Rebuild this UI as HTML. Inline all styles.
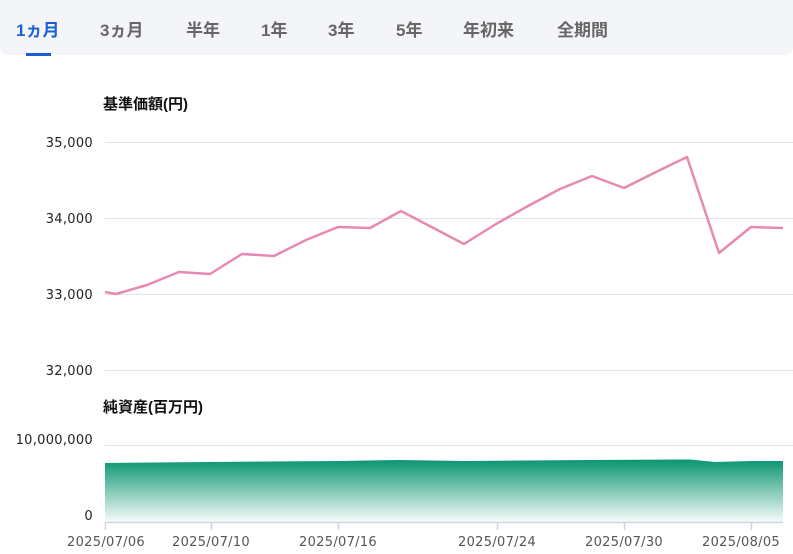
<!DOCTYPE html>
<html><head><meta charset="utf-8"><style>
body{margin:0;width:793px;height:554px;background:#fff;overflow:hidden;font-family:"Liberation Sans","Noto Sans CJK JP",sans-serif;position:relative}
.tabs{position:absolute;left:0;top:0;width:793px;height:55px;background:#f4f5f9;border-radius:0 0 8px 8px}
.tab{position:absolute;top:16px;font-size:17px;font-weight:bold;color:#666}
.act{color:#1a5fd6}
.ul{position:absolute;left:26px;top:53px;width:25px;height:3px;background:#1a5fd6}
</style></head><body>
<div class="tabs">
<span class="tab act" style="left:16px">1ヵ月</span>
<span class="tab" style="left:100px">3ヵ月</span>
<span class="tab" style="left:186px">半年</span>
<span class="tab" style="left:261px">1年</span>
<span class="tab" style="left:328px">3年</span>
<span class="tab" style="left:396px">5年</span>
<span class="tab" style="left:463px">年初来</span>
<span class="tab" style="left:557px">全期間</span>
<div class="ul"></div>
</div>
<svg width="793" height="554" style="position:absolute;left:0;top:0" font-family="Liberation Sans, Noto Sans CJK JP, sans-serif">
<defs><linearGradient id="g" x1="0" y1="0" x2="0" y2="1"><stop offset="0" stop-color="#0a9570"/><stop offset="1" stop-color="#0a9570" stop-opacity="0.03"/></linearGradient></defs>
<text x="103" y="109" font-size="15" font-weight="bold" fill="#111">基準価額(円)</text>
<g stroke="#e3e3e8" stroke-width="1">
<line x1="105" y1="142.5" x2="793" y2="142.5"/><line x1="105" y1="218.5" x2="793" y2="218.5"/>
<line x1="105" y1="294.5" x2="793" y2="294.5"/><line x1="105" y1="370.5" x2="793" y2="370.5"/>
<line x1="105" y1="445.5" x2="793" y2="445.5"/></g>
<g font-size="13" fill="#222" text-anchor="end" font-family="DejaVu Sans, sans-serif" letter-spacing="0.3">
<text x="93" y="147">35,000</text><text x="93" y="223">34,000</text><text x="93" y="299">33,000</text><text x="93" y="375">32,000</text>
<text x="93" y="444">10,000,000</text><text x="93" y="520">0</text></g>
<polyline fill="none" stroke="#e889b4" stroke-width="2.5" stroke-linejoin="round" points="105,292 116,294 147,285 179,272 210,274 242,254 274,256 306,240 338,227 370,228 401,211 464,244 496,224 528,206 560,189 592,176 624,188 656,172 687,157 719,253 751,227 783,228"/>
<text x="103" y="412" font-size="15" font-weight="bold" fill="#111">純資産(百万円)</text>
<path d="M105,463 L210,462 L338,461 L400,460 L464,461 L592,460 L690,459.5 L715,462 L751,461 L783,461 L783,522 L105,522Z" fill="url(#g)"/>
<g stroke="#cfd3e3" stroke-width="1.5"><line x1="105" y1="522.5" x2="783" y2="522.5"/>
<line x1="105.5" y1="522" x2="105.5" y2="530"/><line x1="211.5" y1="522" x2="211.5" y2="530"/><line x1="338.5" y1="522" x2="338.5" y2="530"/><line x1="497.5" y1="522" x2="497.5" y2="530"/><line x1="624.5" y1="522" x2="624.5" y2="530"/><line x1="751.5" y1="522" x2="751.5" y2="530"/></g>
<g font-size="13" fill="#555" text-anchor="middle" font-family="DejaVu Sans, sans-serif" letter-spacing="0.3">
<text x="106" y="546">2025/07/06</text><text x="211" y="546">2025/07/10</text><text x="338" y="546">2025/07/16</text><text x="497" y="546">2025/07/24</text><text x="624" y="546">2025/07/30</text><text x="741" y="546">2025/08/05</text></g>
</svg>
</body></html>
